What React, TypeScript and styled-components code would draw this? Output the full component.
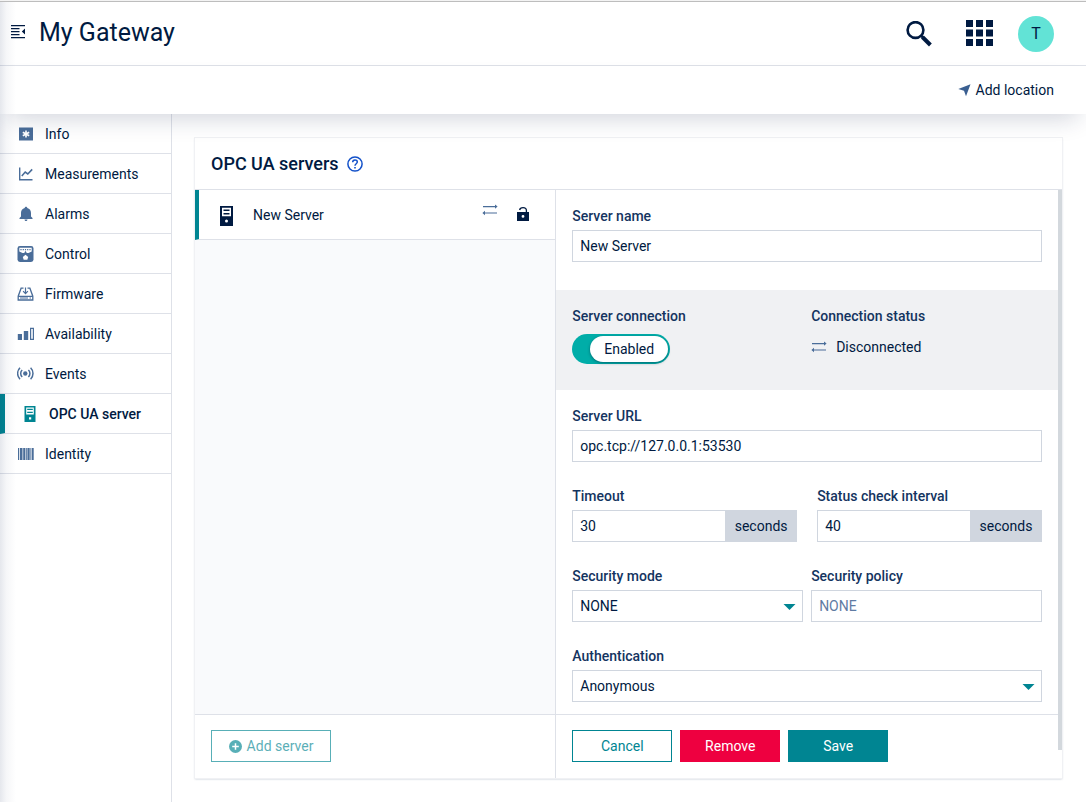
import React from "react";
import styled, { createGlobalStyle, css } from "styled-components";

const color = {
  ink: "#001a41",
  label: "#14345f",
  icon: "#4a6d99",
  teal: "#008592",
  line: "#dee1e8",
  field: "#d0d6df",
};

const GlobalStyle = createGlobalStyle`
  *, *::before, *::after { box-sizing: border-box; }
  body {
    margin: 0;
    background: #fff;
    color: ${color.ink};
    font: 14px/20px Roboto, "Liberation Sans", sans-serif;
  }
  h1, h2, ul { margin: 0; padding: 0; }
  ul { list-style: none; }
  button, input, select { font: inherit; color: inherit; }
  svg { display: block; flex: none; }
`;

/* ---------- page shell ---------- */

const Shell = styled.div`
  position: relative;
  display: flex;
  flex-direction: column;
  min-height: 100vh;
  border-top: 1px solid #f3f3f3;
`;

const EdgeShade = styled.div`
  position: absolute;
  inset: 1px auto 0 0;
  width: 16px;
  pointer-events: none;
  z-index: 3;
  background: linear-gradient(
    to right,
    rgba(20, 40, 90, 0.11),
    rgba(20, 40, 90, 0.04) 40%,
    rgba(20, 40, 90, 0)
  );
`;

const TopBar = styled.header`
  display: flex;
  align-items: center;
  height: 65px;
  padding: 0 32px 0 11px;
  border-top: 1px solid #bdbdbd;
  border-bottom: 1px solid ${color.line};
`;

const PageTitle = styled.h1`
  flex: 1;
  margin-left: 13px;
  padding-bottom: 2px;
  font-size: 25px;
  line-height: 36px;
  font-weight: 400;
`;

const IconButton = styled.button`
  padding: 0;
  border: 0;
  background: none;
  color: ${color.ink};
  cursor: pointer;
`;

const TopActions = styled.div`
  display: flex;
  align-items: center;
  gap: 24px;
`;

const SearchButton = styled(IconButton)`
  margin-right: 10px;
`;

const Avatar = styled(IconButton)`
  width: 36px;
  height: 36px;
  border-radius: 50%;
  background: #62e3d6;
  font-size: 16px;
`;

const ActionBar = styled.div`
  position: relative;
  display: flex;
  align-items: center;
  justify-content: flex-end;
  height: 48px;
  padding: 0 32px;
  background: #fff;
  z-index: 2;
  box-shadow: 0 12px 24px -8px rgba(20, 35, 75, 0.2);
`;

const LocationButton = styled(IconButton)`
  display: flex;
  align-items: center;
  gap: 5px;
`;

const Columns = styled.div`
  display: flex;
  flex: 1;
`;

/* ---------- side navigation ---------- */

const SideNav = styled.nav`
  flex: none;
  width: 172px;
  border-right: 1px solid ${color.line};
`;

const NavLink = styled.a<{ $active?: boolean }>`
  display: flex;
  align-items: center;
  gap: 11px;
  height: 40px;
  padding-left: 17px;
  border-bottom: 1px solid ${color.line};
  color: ${color.ink};
  text-decoration: none;
  svg { color: ${color.icon}; }
  ${(p) =>
    p.$active &&
    css`
      border-left: 5px solid ${color.teal};
      padding-left: 16px;
      font-weight: 500;
      svg { color: ${color.teal}; }
    `}
`;

/* ---------- card ---------- */

const Main = styled.main`
  flex: 1;
  min-width: 0;
  padding: 24px 24px 24px 23px;
`;

const Card = styled.section`
  background: #fff;
  box-shadow: 0 0 0 1px #f0f1f4, 0 1px 2px 0 rgba(20, 50, 90, 0.3);
`;

const CardHeader = styled.header`
  display: flex;
  align-items: center;
  gap: 8px;
  height: 52px;
  padding: 0 16px;
  border-bottom: 1px solid ${color.line};
`;

const CardTitle = styled.h2`
  font-size: 18px;
  line-height: 24px;
  font-weight: 500;
`;

const HelpButton = styled(IconButton)`
  color: #1351c9;
`;

const CardBody = styled.div`
  display: grid;
  grid-template-columns: minmax(0, 5fr) minmax(0, 7fr);
`;

const ListPane = styled.div`
  display: flex;
  flex-direction: column;
  border-right: 1px solid ${color.line};
`;

const ServerList = styled.ul`
  flex: 1;
  background: #f9fafc;
`;

const ServerItem = styled.li`
  display: flex;
  align-items: center;
  height: 50px;
  padding: 0 26px 0 20px;
  border-left: 4px solid ${color.teal};
  border-bottom: 1px solid ${color.line};
  background: #fff;
`;

const ServerLabel = styled.span`
  flex: 1;
  margin-left: 19px;
`;

const ItemIcons = styled.span`
  display: flex;
  align-items: flex-start;
  gap: 19px;
  color: ${color.icon};
`;

const PaneFooter = styled.footer`
  display: flex;
  gap: 8px;
  height: 64px;
  padding: 15px 16px;
  border-top: 1px solid ${color.line};
`;

const Button = styled.button<{ $kind?: "danger" | "primary" }>`
  display: flex;
  align-items: center;
  justify-content: center;
  gap: 5px;
  width: 100px;
  height: 32px;
  padding: 0;
  border: 1px solid ${color.teal};
  background: #fff;
  color: ${color.teal};
  cursor: pointer;
  ${(p) =>
    p.$kind &&
    css`
      border-color: ${p.$kind === "danger" ? "#ee0040" : color.teal};
      background: ${p.$kind === "danger" ? "#ee0040" : color.teal};
      color: #fff;
    `}
  &:disabled { opacity: 0.65; cursor: default; }
`;

const AddButton = styled(Button)`
  width: 120px;
`;

/* ---------- form ---------- */

const FormPane = styled.form`
  position: relative;
  display: flex;
  flex-direction: column;
  padding-right: 4px;
`;

const ScrollThumb = styled.div`
  position: absolute;
  inset: 0 0 28px auto;
  width: 4px;
  background: #d3d8dd;
`;

const FieldGroup = styled.div`
  display: flex;
  flex-direction: column;
  gap: 24px;
  padding: 16px 16px 12px;
`;

const NameGroup = styled(FieldGroup)`
  padding-bottom: 28px;
`;

const ConnectionBand = styled.div`
  display: grid;
  grid-template-columns: 1fr 1fr;
  column-gap: 8px;
  padding: 16px 16px 26px;
  background: #f0f1f3;
`;

const FieldRow = styled.div<{ $gap: number }>`
  display: grid;
  grid-template-columns: 1fr 1fr;
  column-gap: ${(p) => p.$gap}px;
`;

const Field = styled.div`
  display: flex;
  flex-direction: column;
  gap: 4px;
  min-width: 0;
`;

const labelText = css`
  color: ${color.label};
  font-weight: 500;
`;

const FieldLabel = styled.label`
  ${labelText}
`;

const FieldCaption = styled.span`
  ${labelText}
`;

const control = css`
  width: 100%;
  min-width: 0;
  height: 32px;
  padding: 0 8px 0 7px;
  border: 1px solid ${color.field};
  border-radius: 0;
  background: #fff;
`;

const TextInput = styled.input`
  ${control}
  &::placeholder { color: #5f7ba3; opacity: 1; }
`;

const Select = styled.select`
  ${control}
  appearance: none;
`;

const SelectWrap = styled.div`
  position: relative;
  svg {
    position: absolute;
    right: 7px;
    top: 14px;
    color: ${color.teal};
    pointer-events: none;
  }
`;

const InputGroup = styled.div`
  display: flex;
  input { border-right: 0; }
`;

const Addon = styled.span`
  flex: none;
  width: 72px;
  line-height: 32px;
  text-align: center;
  background: ${color.field};
`;

const SwitchInput = styled.input`
  position: absolute;
  opacity: 0;
  inset: 0;
  margin: 0;
  cursor: pointer;
`;

const Switch = styled.label`
  position: relative;
  display: block;
  width: 98px;
  height: 30px;
  margin-top: 4px;
  padding: 2px 2px 2px 18px;
  border-radius: 15px;
  background: #00ada8;
`;

const SwitchKnob = styled.span`
  display: block;
  border-radius: 13px;
  background: #fff;
  line-height: 26px;
  text-align: center;
  box-shadow: 0 1px 3px rgba(0, 40, 60, 0.5);
`;

const Status = styled.span`
  display: flex;
  align-items: center;
  gap: 9px;
  margin-top: 7px;
  svg { color: ${color.icon}; }
`;

/* ---------- icons ---------- */

const OutdentIcon = () => (
  <svg width="15" height="18" viewBox="0 0 15 18" fill="currentColor" aria-hidden="true">
    <path d="M0 0h14v1.300H0zM0 3h8.500v1.300H0zM0 6h8.500v1.300H0zM0 9h8.500v1.300H0zM0 12h14v1.300H0zM14 3.600v6L10.800 6.600z" />
  </svg>
);

const SearchIcon = () => (
  <svg width="26" height="26" viewBox="0 0 26 26" fill="none" stroke="currentColor" aria-hidden="true">
    <circle cx="9.500" cy="9" r="7.900" strokeWidth="2.600" />
    <path d="M15 14.500l1.800 1.800" strokeWidth="2.600" />
    <path d="M16.400 16l8 8" strokeWidth="4" />
  </svg>
);

const AppsIcon = () => (
  <svg width="28" height="27" viewBox="0 0 28 27" fill="currentColor" aria-hidden="true">
    {[0, 10, 20].map((x) => [0, 9.5, 19].map((y) => <rect key={`${x}-${y}`} x={x} y={y} width="7" height="7" />))}
  </svg>
);

const LocationIcon = () => (
  <svg width="13" height="13" viewBox="0 0 13 13" fill="#3a5f91" aria-hidden="true">
    <path d="M12.500 .3L8 12.300 6 6.800 .3 5z" />
  </svg>
);

const NavSvg = ({ children }: { children: React.ReactNode }) => (
  <svg width="17" height="16" viewBox="0 0 17 16" fill="currentColor" stroke="currentColor" strokeWidth="0" aria-hidden="true">
    {children}
  </svg>
);

const InfoIcon = () => (
  <NavSvg>
    <path d="M2 1.500h14v13H2z" />
    <path d="M9 4.400v7.200M5.800 6.200l6.400 3.600M12.200 6.200L5.800 9.800" stroke="#fff" strokeWidth="1.600" />
  </NavSvg>
);

const ChartIcon = () => (
  <NavSvg>
    <path d="M2.700 1.500v12.300H15.500" fill="none" strokeWidth="1.400" />
    <path d="M4.800 10l3.400-4 2.600 2 4.400-4.600" fill="none" strokeWidth="1.600" />
  </NavSvg>
);

const BellIcon = () => (
  <NavSvg>
    <path d="M9 .8c.8 0 1.300.6 1.300 1.300 2.400.6 3.700 2.500 3.700 4.900v3.600l1.500 1.500v.9H2.500v-.9L4 10.600V7c0-2.400 1.300-4.300 3.700-4.900C7.700 1.400 8.200.8 9 .8zM7.500 13.600h3c0 .9-.6 1.500-1.500 1.500s-1.500-.6-1.500-1.500z" />
  </NavSvg>
);

const ControlIcon = () => (
  <NavSvg>
    <rect x=".5" y="0" width="16" height="16" rx="2.400" />
    <path d="M2.300 1.800h12.400v3.600L11.500 7h-6L2.300 5.400z" fill="#fff" />
    <path d="M4 3v1.300M6.300 3v1.300M8.500 3v1.300M10.700 3v1.300M13 3v1.300" strokeWidth="1.200" />
    <path d="M8.500 4.800l1.500 2.700H7z" />
    <path d="M8.500 8.700l2.700 2.400-.9 2.700H6.700l-.9-2.700z" fill="#fff" />
  </NavSvg>
);

const FirmwareIcon = () => (
  <NavSvg>
    <path d="M6.500 2.200H4.100L1.200 10.200V14h14.600v-3.800L12.900 2.200h-2.400M1.200 10.400h14.600" fill="none" strokeWidth="1.300" />
    <path d="M8.500 1.500v6M6.100 5.200l2.400 2.400 2.400-2.400" fill="none" strokeWidth="1.200" />
    <path d="M3 11.600h8v1H3zM12.500 11.600h1.500v1h-1.500z" />
  </NavSvg>
);

const AvailabilityIcon = () => (
  <NavSvg>
    <path d="M.8 8h4.200v6H.8zM6.800 5h4.400v9H6.800z" />
    <path d="M13.600 2.400h2.800v11h-2.800z" fill="none" strokeWidth="1.200" />
  </NavSvg>
);

const EventsIcon = () => (
  <NavSvg>
    <circle cx="8.300" cy="7.500" r="2.200" />
    <path
      d="M5.200 4a4.800 4.800 0 0 0 0 7M11.400 4a4.800 4.800 0 0 1 0 7M3 1.800a8 8 0 0 0 0 11.400M13.600 1.800a8 8 0 0 1 0 11.400"
      fill="none"
      strokeWidth="1.500"
    />
  </NavSvg>
);

const ServerNavIcon = () => (
  <NavSvg>
    <path fillRule="evenodd" d="M3.500 0h11v16h-11zM5.200 1.500v7h7.600v-7zM8 11.300v2.200h2.200v-2.200z" />
    <path d="M6.200 2.800h5.600v1.300H6.200zM6.200 5.800h5.600v1.300H6.200z" />
  </NavSvg>
);

const BarcodeIcon = () => (
  <NavSvg>
    <path d="M1 2h1.200v12H1zM3 2h2.500v12H3zM6.200 2h2v12h-2zM8.800 2h1v12h-1zM10.400 2h2.300v12h-2.300zM13.400 2h1v12h-1zM15 2h1.700v12H15z" />
  </NavSvg>
);

const HelpIcon = () => (
  <svg width="16" height="16" viewBox="0 0 16 16" fill="none" stroke="currentColor" aria-hidden="true">
    <circle cx="8" cy="8" r="7.100" strokeWidth="1.500" />
    <path d="M5.700 6.300C5.700 4.900 6.700 4 8 4s2.300.9 2.300 2.100C10.300 7.700 8 7.900 8 9.800" strokeWidth="1.500" />
    <path d="M8 11v1.600" strokeWidth="1.600" />
  </svg>
);

const ServerIcon = () => (
  <svg width="15" height="22" viewBox="0 -2 15 22" fill="currentColor" aria-hidden="true">
    <path fillRule="evenodd" d="M1 0h13v20H1zM3 1.700v8.600h9V1.700zM7.500 13.600a1.500 1.500 0 1 0 0 3 1.500 1.500 0 0 0 0-3z" />
    <path d="M4.500 3.500h6v1.500h-6zM4.500 7h6v1.500h-6z" />
  </svg>
);

const SwapIcon = () => (
  <svg width="16" height="12" viewBox="0 0 16 12" fill="currentColor" aria-hidden="true">
    <path d="M1 2h12V.4l2.600 2.200L13 4.800V3.200H1zM15 8.400H3V6.800L.4 9 3 11.200V9.600h12z" />
  </svg>
);

const UnlockIcon = () => (
  <svg width="12" height="21" viewBox="0 0 12 21" fill={color.ink} aria-hidden="true">
    <path fillRule="evenodd" d="M0 8h12v9H0zM6 11a1.400 1.400 0 1 0 0 2.800A1.400 1.400 0 0 0 6 11z" />
    <path d="M2.600 6C2.900 4.500 4.200 3.700 6 3.700c2 0 3.400 1.100 3.400 2.900V8.500" fill="none" stroke={color.ink} strokeWidth="1.300" />
  </svg>
);

const PlusCircleIcon = () => (
  <svg width="13" height="13" viewBox="0 0 13 13" aria-hidden="true">
    <circle cx="6.500" cy="6.500" r="6.500" fill="currentColor" />
    <path d="M6.500 3.200v6.600M3.200 6.500h6.600" stroke="#fff" strokeWidth="1.500" />
  </svg>
);

const Caret = () => (
  <svg width="13" height="6" viewBox="0 0 13 6" fill="currentColor" aria-hidden="true">
    <path d="M.5 0h12l-6 6z" />
  </svg>
);

/* ---------- content ---------- */

const navItems = [
  { label: "Info", Icon: InfoIcon },
  { label: "Measurements", Icon: ChartIcon },
  { label: "Alarms", Icon: BellIcon },
  { label: "Control", Icon: ControlIcon },
  { label: "Firmware", Icon: FirmwareIcon },
  { label: "Availability", Icon: AvailabilityIcon },
  { label: "Events", Icon: EventsIcon },
  { label: "OPC UA server", Icon: ServerNavIcon, active: true },
  { label: "Identity", Icon: BarcodeIcon },
];

function SecondsField({ id, label, value }: { id: string; label: string; value: string }) {
  return (
    <Field>
      <FieldLabel htmlFor={id}>{label}</FieldLabel>
      <InputGroup>
        <TextInput id={id} defaultValue={value} inputMode="numeric" />
        <Addon>seconds</Addon>
      </InputGroup>
    </Field>
  );
}

function SelectField({ id, label, value }: { id: string; label: string; value: string }) {
  return (
    <Field>
      <FieldLabel htmlFor={id}>{label}</FieldLabel>
      <SelectWrap>
        <Select id={id} defaultValue={value}>
          <option>{value}</option>
        </Select>
        <Caret />
      </SelectWrap>
    </Field>
  );
}

function ServerForm() {
  return (
    <FormPane onSubmit={(e) => e.preventDefault()}>
      <NameGroup>
        <Field>
          <FieldLabel htmlFor="server-name">Server name</FieldLabel>
          <TextInput id="server-name" defaultValue="New Server" />
        </Field>
      </NameGroup>
      <ConnectionBand>
        <Field>
          <FieldCaption id="connection-label">Server connection</FieldCaption>
          <Switch>
            <SwitchInput type="checkbox" defaultChecked aria-labelledby="connection-label" />
            <SwitchKnob>Enabled</SwitchKnob>
          </Switch>
        </Field>
        <Field>
          <FieldCaption>Connection status</FieldCaption>
          <Status>
            <SwapIcon />
            Disconnected
          </Status>
        </Field>
      </ConnectionBand>
      <FieldGroup>
        <Field>
          <FieldLabel htmlFor="server-url">Server URL</FieldLabel>
          <TextInput id="server-url" defaultValue="opc.tcp://127.0.0.1:53530" />
        </Field>
        <FieldRow $gap={20}>
          <SecondsField id="timeout" label="Timeout" value="30" />
          <SecondsField id="interval" label="Status check interval" value="40" />
        </FieldRow>
        <FieldRow $gap={8}>
          <SelectField id="security-mode" label="Security mode" value="NONE" />
          <Field>
            <FieldLabel htmlFor="security-policy">Security policy</FieldLabel>
            <TextInput id="security-policy" placeholder="NONE" disabled />
          </Field>
        </FieldRow>
        <SelectField id="authentication" label="Authentication" value="Anonymous" />
      </FieldGroup>
      <PaneFooter>
        <Button type="button">Cancel</Button>
        <Button type="button" $kind="danger">Remove</Button>
        <Button type="submit" $kind="primary">Save</Button>
      </PaneFooter>
      <ScrollThumb />
    </FormPane>
  );
}

export default function App() {
  return (
    <>
      <GlobalStyle />
      <Shell>
        <EdgeShade />
        <TopBar>
          <IconButton type="button" aria-label="Toggle navigation">
            <OutdentIcon />
          </IconButton>
          <PageTitle>My Gateway</PageTitle>
          <TopActions>
            <SearchButton type="button" aria-label="Search">
              <SearchIcon />
            </SearchButton>
            <IconButton type="button" aria-label="Applications">
              <AppsIcon />
            </IconButton>
            <Avatar type="button">T</Avatar>
          </TopActions>
        </TopBar>
        <ActionBar>
          <LocationButton type="button">
            <LocationIcon />
            Add location
          </LocationButton>
        </ActionBar>
        <Columns>
          <SideNav>
            {navItems.map(({ label, Icon, active }) => (
              <NavLink key={label} href="#" $active={active} aria-current={active ? "page" : undefined}>
                <Icon />
                {label}
              </NavLink>
            ))}
          </SideNav>
          <Main>
            <Card>
              <CardHeader>
                <CardTitle>OPC UA servers</CardTitle>
                <HelpButton type="button" aria-label="Help">
                  <HelpIcon />
                </HelpButton>
              </CardHeader>
              <CardBody>
                <ListPane>
                  <ServerList>
                    <ServerItem>
                      <ServerIcon />
                      <ServerLabel>New Server</ServerLabel>
                      <ItemIcons>
                        <SwapIcon />
                        <UnlockIcon />
                      </ItemIcons>
                    </ServerItem>
                  </ServerList>
                  <PaneFooter>
                    <AddButton type="button" disabled>
                      <PlusCircleIcon />
                      Add server
                    </AddButton>
                  </PaneFooter>
                </ListPane>
                <ServerForm />
              </CardBody>
            </Card>
          </Main>
        </Columns>
      </Shell>
    </>
  );
}
